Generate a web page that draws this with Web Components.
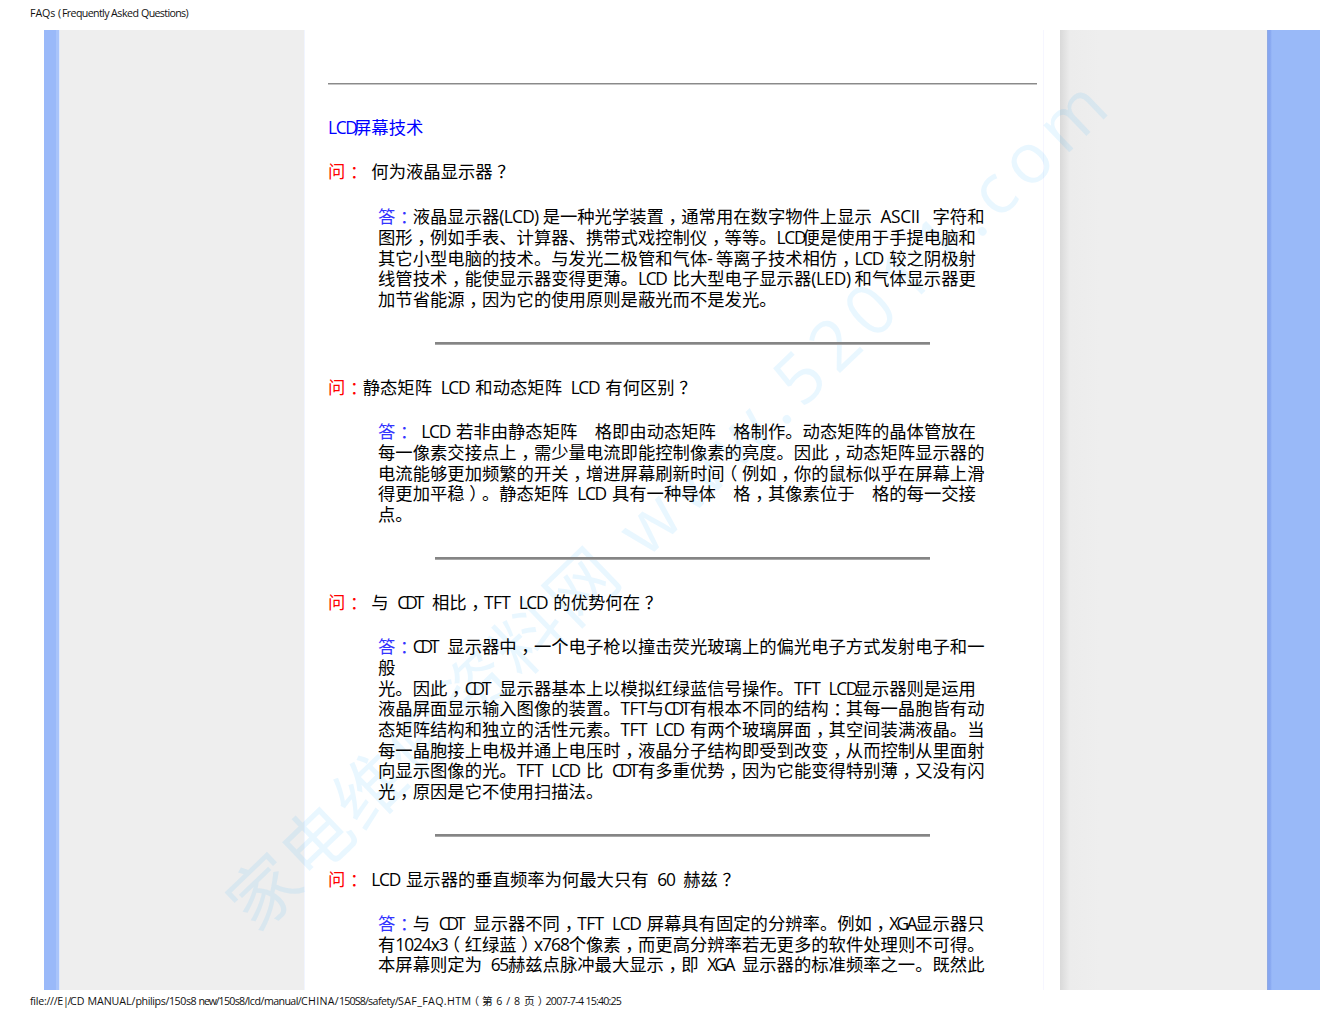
<!DOCTYPE html>
<html lang="zh-CN"><head><meta charset="utf-8">
<style>
html,body{margin:0;padding:0;background:#fff}
body{width:1320px;height:1020px;overflow:hidden;font-family:"Open Sans","Noto Sans CJK SC",sans-serif}
</style></head><body>
<faq-page>
  <page-note slot="head"><f-t w="28">FAQs </f-t><f-t w="4">(</f-t><f-t w="49">Frequently </f-t><f-t w="30">Asked </f-t><f-t w="47">Questions)</f-t></page-note>
  <page-note slot="foot"><f-t w="33">file:///E</f-t><f-t w="7">|/</f-t><f-t w="17.4">CD </f-t><f-t w="48">MANUAL/</f-t><f-t w="33.5">philips/</f-t><f-t w="29.6">150s8 </f-t><f-t w="20">new/</f-t><f-t w="29">150s8/</f-t><f-t w="16.4">lcd/</f-t><f-t w="37">manual/</f-t><f-t w="38">CHINA/</f-t><f-t w="29">150S8/</f-t><f-t w="30">safety/</f-t><f-t w="73.4">SAF_FAQ.HTM</f-t><p-n>（</p-n>第<f-t w="31.3"> 6 / 8 </f-t>页<p-n>）</p-n><f-t w="40">2007-7-4 </f-t><f-t w="35.7">15:40:25</f-t></page-note>
  <faq-rule kind="wide"></faq-rule>
  <faq-title><t-l>LCD屏幕技术</t-l></faq-title>
  <faq-q label="问"><t-l> 何为液晶显示器？</t-l></faq-q>
  <faq-a label="答" style="margin-top:25px">
    <t-l>液晶显示器(LCD)是一种光学装置，通常用在数字物件上显示 ASCII 字符和</t-l>
    <t-l>图形，例如手表、计算器、携带式戏控制仪，等等。LCD便是使用于手提电脑和</t-l>
    <t-l>其它小型电脑的技术。与发光二极管和气体-等离子技术相仿，LCD 较之阴极射</t-l>
    <t-l>线管技术，能使显示器变得更薄。LCD 比大型电子显示器(LED)和气体显示器更</t-l>
    <t-l>加节省能源，因为它的使用原则是蔽光而不是发光。</t-l>
  </faq-a>
  <faq-rule></faq-rule>
  <faq-q label="问"><t-l>静态矩阵 LCD 和动态矩阵 LCD 有何区别？</t-l></faq-q>
  <faq-a label="答">
    <t-l> LCD 若非由静态矩阵  格即由动态矩阵  格制作。动态矩阵的晶体管放在</t-l>
    <t-l>每一像素交接点上，需少量电流即能控制像素的亮度。因此，动态矩阵显示器的</t-l>
    <t-l>电流能够更加频繁的开关，增进屏幕刷新时间（例如，你的鼠标似乎在屏幕上滑</t-l>
    <t-l>得更加平稳）。静态矩阵 LCD 具有一种导体  格，其像素位于  格的每一交接</t-l>
    <t-l>点。</t-l>
  </faq-a>
  <faq-rule></faq-rule>
  <faq-q label="问"><t-l> 与 CDT 相比，TFT LCD 的优势何在？</t-l></faq-q>
  <faq-a label="答">
    <t-l>CDT 显示器中，一个电子枪以撞击荧光玻璃上的偏光电子方式发射电子和一</t-l>
    <t-l>般</t-l>
    <t-l>光。因此，CDT 显示器基本上以模拟红绿蓝信号操作。TFT LCD显示器则是运用</t-l>
    <t-l>液晶屏面显示输入图像的装置。TFT与CDT有根本不同的结构：其每一晶胞皆有动</t-l>
    <t-l>态矩阵结构和独立的活性元素。TFT LCD 有两个玻璃屏面，其空间装满液晶。当</t-l>
    <t-l>每一晶胞接上电极并通上电压时，液晶分子结构即受到改变，从而控制从里面射</t-l>
    <t-l>向显示图像的光。TFT LCD 比 CDT有多重优势，因为它能变得特别薄，又没有闪</t-l>
    <t-l>光，原因是它不使用扫描法。</t-l>
  </faq-a>
  <faq-rule></faq-rule>
  <faq-q label="问"><t-l> LCD 显示器的垂直频率为何最大只有 60 赫兹？</t-l></faq-q>
  <faq-a label="答">
    <t-l>与 CDT 显示器不同，TFT LCD 屏幕具有固定的分辨率。例如，XGA显示器只</t-l>
    <t-l>有1024x3（红绿蓝）x768个像素，而更高分辨率若无更多的软件处理则不可得。</t-l>
    <t-l>本屏幕则定为 65赫兹点脉冲最大显示，即 XGA 显示器的标准频率之一。既然此</t-l>
  </faq-a>
</faq-page>
<script>
const FONT='"Open Sans","Noto Sans CJK SC",sans-serif';
const ctx=document.createElement('canvas').getContext('2d');
ctx.fontKerning='none';
const NUDGE={'，':.27,'：':.27,'？':.27,'）':.27,'（':-.27};
const nudge=c=>`margin:0 ${-NUDGE[c]}em 0 ${NUDGE[c]}em`;
function grid(host,size){
  ctx.font=size+'px "Open Sans"';
  const cell=size/2, sp=ctx.measureText(' ').width;
  const src=host.textContent; host.textContent='';
  src.split(/([\x20-\x7e]+)/).forEach((part,i)=>{
    if(!part) return;
    if(i%2===0){
      part.split(/([，：？（）])/).forEach((p,j)=>{
        if(!p) return;
        if(j%2===0){host.append(p);return;}
        const s=document.createElement('span');s.textContent=p;s.style.cssText=nudge(p);host.append(s);
      });
      return;
    }
    (part.match(/ *[^ ]+| +/g)||[]).forEach(tok=>{
      const w=tok.replace(/ /g,''), n=w.length;
      let ls=0, mr=0;
      if(n>1){
        const full=ctx.measureText(w).width, last=ctx.measureText(w[n-1]).width;
        ls=((n-1)*cell-(full-last))/(n-1);
        mr=n*cell-(full+n*ls);
      }else if(n===1){
        ls=cell-ctx.measureText(w).width;
      }
      const s=document.createElement('span');
      s.textContent=tok;
      s.style.cssText=`letter-spacing:${ls.toFixed(3)}px;word-spacing:${(cell-sp-ls).toFixed(3)}px;margin-right:${mr.toFixed(3)}px;font-kerning:none`;
      host.append(s);
    });
  });
}
const def=(n,css,html,extra)=>customElements.define(n,class extends HTMLElement{
  constructor(){super();this.attachShadow({mode:'open'}).innerHTML=`<style>${css}</style>${html}`;}
  connectedCallback(){extra&&extra(this)}
});
def('faq-page',`
:host{display:grid;grid-template-rows:30px 960px 30px;width:1320px;height:1020px;position:relative;overflow:hidden;
  font:17.33px/20.7px ${FONT};color:#000;text-spacing-trim:space-all}
.bar{padding-left:30px;box-sizing:border-box}
.head{padding-top:7px}
.foot{padding-top:5px}
.band{display:grid;grid-template-columns:16px 245px 755px 208px 52px;margin-left:44px;width:1276px;overflow:hidden}
.blue-l{background:linear-gradient(90deg,#9ab9f9 0 12px,#a9c4fa 12px 15px,#dfe8fb 15px)}
.gray-l{background:#eeeeee;border-right:1px solid #f1f5ff;box-sizing:border-box}
.gray-r{background:linear-gradient(90deg,#d9d9d9,#ececec 10px,#eeeeee 40px);border-right:1px solid #8ea9e4;box-sizing:border-box}
.blue-r{background:linear-gradient(90deg,#86a6f0 0 2px,#99b9f8 4px)}
.main{background:#fff;padding:0 22px 0 23px;position:relative;box-sizing:border-box}
.edge{position:absolute;right:16px;top:0;bottom:0;width:1px;background:#f6f6ff}
.content{position:relative;z-index:2}
.over{position:absolute;left:0;right:0;top:30px;height:960px;overflow:hidden;pointer-events:none}
.mark{position:absolute;left:238px;top:840px;width:1300px;height:90px;transform:rotate(-43.9deg);transform-origin:left center;
  font:70px/90px ${FONT};color:rgba(0,165,255,.085);letter-spacing:3.4px;white-space:pre}
.mark .la{letter-spacing:8.8px}
`,`
<div class="bar head"><slot name="head"></slot></div>
<div class="band">
  <div class="blue-l"></div><div class="gray-l"></div>
  <div class="main"><div class="edge"></div><div class="content"><slot></slot></div></div>
  <div class="gray-r"></div><div class="blue-r"></div>
</div>
<div class="bar foot"><slot name="foot"></slot></div>
<div class="over"><div class="mark"></div></div>
`,e=>{
  const m=e.shadowRoot.querySelector('.mark');
  if(m.childNodes.length) return;
  [...'家电维修资料网 www.52011.com'].forEach(c=>{
    const s=document.createElement('span');s.textContent=c;
    if(c.charCodeAt(0)<128)s.className='la';
    m.append(s);
  });
});
def('page-note',`:host{display:block;font-size:10.67px;line-height:12px;white-space:pre;color:#111}`,`<slot></slot>`);
customElements.define('f-t',class extends HTMLElement{
  constructor(){super();this.attachShadow({mode:'open'}).innerHTML='<slot></slot>';}
  connectedCallback(){
    const t=this.textContent, w=parseFloat(this.getAttribute('w'));
    ctx.font='10.67px "Open Sans"';
    this.style.letterSpacing=((w-ctx.measureText(t).width)/t.length).toFixed(3)+'px';
    this.style.fontKerning='none';
  }
});
customElements.define('p-n',class extends HTMLElement{
  constructor(){super();this.attachShadow({mode:'open'}).innerHTML='<slot></slot>';}
  connectedCallback(){this.style.cssText=nudge(this.textContent)}
});
def('faq-rule',`
:host{display:block;padding:32px 0 32.5px}
.r{margin:0 0 0 107px;height:3px;background:#858585;width:495px;box-sizing:border-box;border-bottom:1px solid #a8a8a8}
:host([kind=wide]){padding:53px 0 0}
:host([kind=wide]) .r{margin:0;width:709px;height:2px;background:#8a8a8a;border-bottom:1px solid #c6c6c6}
`,`<div class="r"></div>`);
def('faq-title',`:host{display:block;color:#0000ff;margin:32px 0 23px}`,`<slot></slot>`);
const label=e=>{e.shadowRoot.querySelector('b').firstChild.textContent=e.getAttribute('label')};
def('faq-q',`:host{display:block;white-space:pre}b{font-weight:400;color:#ff0000;float:left}
i{font-style:normal;${nudge('：')}}`,`<b>&#8203;<i>：</i></b><slot></slot>`,label);
def('faq-a',`:host{display:block;margin:23.25px 0 0 50px;width:620px;position:relative}
b{font-weight:400;color:#3333ff;position:absolute;left:0;top:0}
i{font-style:normal;${nudge('：')}}
::slotted(t-l:first-of-type){text-indent:34.66px}`,`<b>&#8203;<i>：</i></b><slot></slot>`,label);
def('t-l',`:host{display:block;white-space:pre;height:20.7px}`,`<slot></slot>`,
 e=>grid(e,17.33));
</script>
</body></html>
